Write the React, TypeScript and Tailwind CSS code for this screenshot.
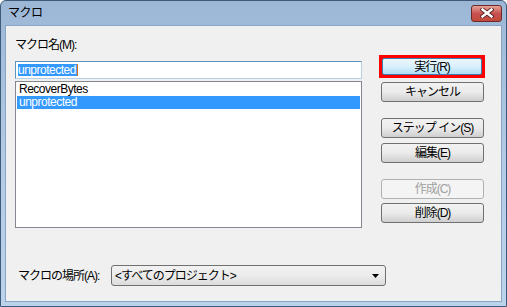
import React from "react";

const font = { fontFamily: '"Liberation Sans", "Noto Sans CJK JP", sans-serif' };

function Btn({ children, primary, disabled }: { children: React.ReactNode; primary?: boolean; disabled?: boolean }) {
  if (primary) {
    return (
      <div className="w-[106px] h-[23px] border-[3px] border-[#ff0000] bg-[#ff0000]">
        <div className="w-full h-full rounded-[2px] border border-[#3c7fb1] bg-gradient-to-b from-[#eaf6fd] via-[#d9f0fc] to-[#b2dff9] flex items-center justify-center text-[12px] tracking-[-1px] text-black leading-none">
          {children}
        </div>
      </div>
    );
  }
  return (
    <div
      className={
        "w-[103px] h-[20px] rounded-[3px] border flex items-center justify-center text-[12px] tracking-[-1px] leading-none " +
        (disabled
          ? "border-[#adb2b5] bg-[#f4f4f4] text-[#a0a0a0]"
          : "border-[#707070] bg-gradient-to-b from-[#f2f2f2] via-[#ebebeb] to-[#cfcfcf] text-black")
      }
    >
      {children}
    </div>
  );
}

export default function App() {
  return (
    <div style={font} className="w-[507px] h-[307px] bg-white">
      <div className="w-full h-full border border-[#3d5a7a] rounded-t-[6px] bg-gradient-to-b from-[#9cb7d6] via-[#b2cae4] to-[#bcd3ec] flex flex-col overflow-hidden">
        {/* title bar */}
        <div className="h-[24px] flex items-center justify-between pl-[7px] pr-[4px] shrink-0">
          <span className="text-[12px] text-black leading-none tracking-[-0.5px]">マクロ</span>
          <div className="w-[31px] h-[17px] rounded-[3px] border border-[#6b2a28] bg-gradient-to-b from-[#e5a497] via-[#c75050] to-[#c24a3c] flex items-center justify-center">
            <svg width="14" height="10" viewBox="0 0 14 10">
              <path d="M2.5 1.5 L11.5 8.5 M11.5 1.5 L2.5 8.5" stroke="#5a2420" strokeWidth="4.2" strokeLinecap="square" />
              <path d="M2.5 1.5 L11.5 8.5 M11.5 1.5 L2.5 8.5" stroke="#ffffff" strokeWidth="2.4" strokeLinecap="square" />
            </svg>
          </div>
        </div>
        {/* content */}
        <div className="flex-1 mx-[4px] mb-[4px] bg-[#f0f0f0] border border-[#8aa4c4] flex flex-col">
          <div className="flex flex-1">
            <div className="ml-[9px] mt-[13px] w-[347px] flex flex-col">
              <div className="text-[12px] text-black leading-none h-[14px] tracking-[-1px]">マクロ名(M):</div>
              <div className="mt-[8px] h-[18px] border border-[#5c93bc] border-r-[#b5cfe7] border-b-[#b5cfe7] bg-white flex items-center pl-[2px]">
                <span className="bg-[#3399ff] text-white text-[12px] leading-[12px] h-[12px] pr-px tracking-[-0.5px]">unprotected</span>
                <span className="w-px h-[12px] bg-[#e07010]"></span>
              </div>
              <div className="mt-[2px] h-[147px] border border-[#828790] bg-white pt-px pl-px pr-px">
                <div className="h-[13px] text-[12px] leading-[13px] text-black pl-[2px] tracking-[-0.5px]">RecoverBytes</div>
                <div className="h-[13px] text-[12px] leading-[13px] text-white bg-[#3399ff] pl-[2px] tracking-[-0.5px]">unprotected</div>
              </div>
            </div>
            <div className="ml-[19px] mt-[29px] flex flex-col">
              <div className="-ml-[2px]">
                <Btn primary>実行(R)</Btn>
              </div>
              <div className="mt-[4px]"><Btn>キャンセル</Btn></div>
              <div className="mt-[16px]"><Btn>ステップ イン(S)</Btn></div>
              <div className="mt-[5px]"><Btn>編集(E)</Btn></div>
              <div className="mt-[16px]"><Btn disabled>作成(C)</Btn></div>
              <div className="mt-[4px]"><Btn>削除(D)</Btn></div>
            </div>
          </div>
          <div className="flex items-center h-[21px] mb-[15px] ml-[12px]">
            <span className="text-[12px] leading-none text-black w-[93px] shrink-0 tracking-[-1px]">マクロの場所(A):</span>
            <div className="w-[275px] h-[21px] rounded-[3px] border border-[#707070] bg-gradient-to-b from-[#f2f2f2] via-[#ebebeb] to-[#dcdcdc] flex items-center justify-between pl-[3px] pr-[6px]">
              <span className="text-[12px] leading-none text-black tracking-[-1px]">&lt;すべてのプロジェクト&gt;</span>
              <svg width="7" height="4" viewBox="0 0 7 4"><path d="M0 0 H7 L3.5 4 Z" fill="#000" /></svg>
            </div>
          </div>
        </div>
      </div>
    </div>
  );
}
